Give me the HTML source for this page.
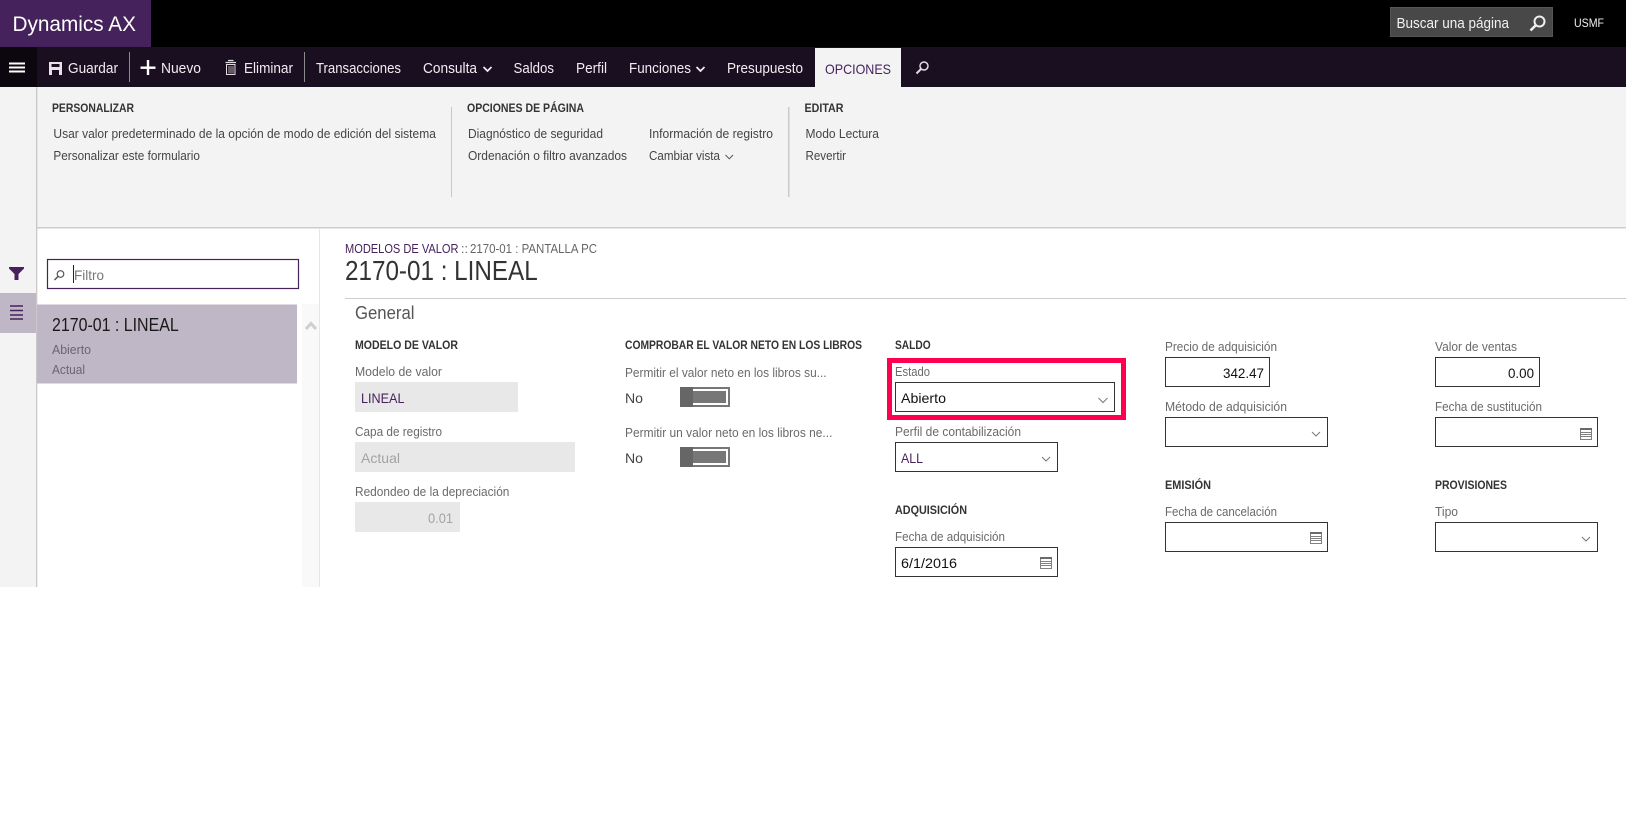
<!DOCTYPE html>
<html lang="es">
<head>
<meta charset="utf-8">
<title>Dynamics AX</title>
<style>
html,body{margin:0;padding:0;background:#fff;width:1626px;height:822px;overflow:hidden}
svg{display:block}
text{font-family:"Liberation Sans",sans-serif;white-space:pre}
.cmd{font-size:14.5px;fill:#f0edf2}
.rh{font-size:11.5px;font-weight:bold;fill:#333}
.ri{font-size:12.5px;fill:#444}
.lb{font-size:12.5px;fill:#6a6a6a}
.h{font-size:11.5px;font-weight:bold;fill:#333}
.v{font-size:14px;fill:#111}
.box{fill:#fff;stroke:#333;stroke-width:1}
.dis{fill:#e8e8e8}
.chev{fill:none;stroke:#777;stroke-width:1}
.cal{fill:none;stroke:#808080;stroke-width:1}
</style>
</head>
<body>
<svg xmlns="http://www.w3.org/2000/svg" width="1626" height="822" viewBox="0 0 1626 822" shape-rendering="geometricPrecision">
<defs>
<g id="cal">
<rect class="cal" x=".5" y=".5" width="11" height="11"/>
<rect x="0" y="0" width="12" height="2" fill="#6a6a6a"/>
<path class="cal" d="M1 4.500H11M1 6.500H11M1 8.500H11"/>
</g>
</defs>

<!-- top bar -->
<rect x="0" y="0" width="1626" height="47" fill="#000"/>
<rect x="0" y="0" width="151" height="47" fill="#45225b"/>
<text x="12.5" y="31" font-size="21" fill="#fff" textLength="123.5" lengthAdjust="spacingAndGlyphs">Dynamics AX</text>
<rect x="1390.5" y="7.5" width="162" height="29" fill="#484848" stroke="#555"/>
<text x="1396.5" y="28" font-size="14.5" fill="#f2f2f2" textLength="112.5" lengthAdjust="spacingAndGlyphs">Buscar una página</text>
<circle cx="1539.5" cy="21.5" r="5" fill="none" stroke="#f0f0f0" stroke-width="2"/>
<path d="M1535.5 25.5L1530.5 30.5" stroke="#f0f0f0" stroke-width="2.6" fill="none"/>
<text x="1574" y="27" font-size="12" fill="#f0f0f0" textLength="30" lengthAdjust="spacingAndGlyphs">USMF</text>

<!-- command bar -->
<rect x="0" y="47" width="1626" height="40" fill="#1a0f20"/>
<rect x="0" y="47" width="37" height="40" fill="#0c070f"/>
<rect x="9" y="62.5" width="16" height="2" fill="#fff"/>
<rect x="9" y="66.5" width="16" height="2" fill="#fff"/>
<rect x="9" y="70.5" width="16" height="2" fill="#fff"/>
<path fill-rule="evenodd" d="M49 62H62V75H59V70H52V75H49ZM51.5 64V67H59.5V64Z" fill="#e6e3e8"/>
<text x="68" y="73" class="cmd" textLength="50" lengthAdjust="spacingAndGlyphs">Guardar</text>
<rect x="129" y="52" width="1" height="30" fill="#8a8a8a"/>
<rect x="140.5" y="66.5" width="15" height="2.4" fill="#fff"/>
<rect x="146.8" y="60" width="2.4" height="15" fill="#fff"/>
<text x="161" y="73" class="cmd" textLength="40" lengthAdjust="spacingAndGlyphs">Nuevo</text>
<path d="M225.5 62.5H236M228 60.5H233.500" stroke="#e0dde2" stroke-width="1.2" fill="none"/>
<rect x="226.500" y="64.500" width="8.500" height="10" fill="none" stroke="#e0dde2"/>
<path d="M229 66V73.500M231 66V73.500M233 66V73.500" stroke="#aaa6ad" stroke-width="1" fill="none"/>
<text x="244" y="73" class="cmd" textLength="49" lengthAdjust="spacingAndGlyphs">Eliminar</text>
<rect x="304" y="52" width="1" height="30" fill="#8a8a8a"/>
<text x="316" y="73" class="cmd" textLength="85" lengthAdjust="spacingAndGlyphs">Transacciones</text>
<text x="423" y="73" class="cmd" textLength="54" lengthAdjust="spacingAndGlyphs">Consulta</text>
<path d="M483.500 67L487.500 71L491.500 67" fill="none" stroke="#f0edf2" stroke-width="1.700"/>
<text x="513.500" y="73" class="cmd" textLength="40.500" lengthAdjust="spacingAndGlyphs">Saldos</text>
<text x="576" y="73" class="cmd" textLength="31" lengthAdjust="spacingAndGlyphs">Perfil</text>
<text x="629" y="73" class="cmd" textLength="62" lengthAdjust="spacingAndGlyphs">Funciones</text>
<path d="M696.500 67L700.500 71L704.500 67" fill="none" stroke="#f0edf2" stroke-width="1.700"/>
<text x="727" y="73" class="cmd" textLength="76" lengthAdjust="spacingAndGlyphs">Presupuesto</text>
<rect x="815" y="48" width="86" height="39" fill="#f3f3f3"/>
<text x="825" y="74" font-size="14" fill="#45225b" textLength="66" lengthAdjust="spacingAndGlyphs">OPCIONES</text>
<circle cx="924" cy="66" r="4" fill="none" stroke="#e0dde2" stroke-width="1.500"/>
<path d="M921 69L916.500 73.500" stroke="#e0dde2" stroke-width="2" fill="none"/>

<!-- ribbon -->
<rect x="0" y="87" width="1626" height="140" fill="#f3f3f3"/>
<rect x="36" y="227" width="1590" height="1.500" fill="#cccccc"/>
<rect x="0" y="227" width="36" height="360" fill="#f3f3f3"/>
<rect x="36" y="87" width="1.300" height="500" fill="#c9c9c9"/>
<text x="52" y="112" class="rh" textLength="82" lengthAdjust="spacingAndGlyphs">PERSONALIZAR</text>
<text x="53.400" y="138" class="ri" textLength="382.500" lengthAdjust="spacingAndGlyphs">Usar valor predeterminado de la opción de modo de edición del sistema</text>
<text x="53.400" y="160" class="ri" textLength="146.500" lengthAdjust="spacingAndGlyphs">Personalizar este formulario</text>
<rect x="451" y="107" width="1" height="90" fill="#c9c9c9"/>
<text x="467" y="112" class="rh" textLength="117" lengthAdjust="spacingAndGlyphs">OPCIONES DE PÁGINA</text>
<text x="468" y="138" class="ri" textLength="135" lengthAdjust="spacingAndGlyphs">Diagnóstico de seguridad</text>
<text x="468" y="160" class="ri" textLength="159" lengthAdjust="spacingAndGlyphs">Ordenación o filtro avanzados</text>
<text x="649" y="138" class="ri" textLength="124" lengthAdjust="spacingAndGlyphs">Información de registro</text>
<text x="649" y="160" class="ri" textLength="71" lengthAdjust="spacingAndGlyphs">Cambiar vista</text>
<path d="M725.500 155L729.300 158.800L733 155" fill="none" stroke="#555" stroke-width="1"/>
<rect x="788" y="107" width="1.500" height="90" fill="#c9c9c9"/>
<text x="804.500" y="112" class="rh" textLength="39" lengthAdjust="spacingAndGlyphs">EDITAR</text>
<text x="805.500" y="138" class="ri" textLength="73.500" lengthAdjust="spacingAndGlyphs">Modo Lectura</text>
<text x="805.500" y="160" class="ri" textLength="40.500" lengthAdjust="spacingAndGlyphs">Revertir</text>

<!-- rail icons -->
<path d="M9 267H24V268.500L18.500 274V280H14.500V274L9 268.500Z" fill="#45225b"/>
<rect x="0" y="293" width="36" height="40" fill="#bfb7c5"/>
<path d="M10 306H23M10 310.500H23M10 315H23M10 319H23" stroke="#45225b" stroke-width="1.600" fill="none"/>

<!-- list pane -->
<rect x="319" y="228" width="1" height="359" fill="#e6e6e6"/>
<rect x="47.500" y="259.500" width="251" height="29" fill="#fff" stroke="#45225b" stroke-width="1.200"/>
<circle cx="60.500" cy="274" r="3.300" fill="none" stroke="#555" stroke-width="1.200"/>
<path d="M58 276.500L54.500 280" stroke="#555" stroke-width="1.500" fill="none"/>
<rect x="73" y="265" width="1" height="18" fill="#222"/>
<text x="74" y="280" font-size="14" fill="#777" textLength="30" lengthAdjust="spacingAndGlyphs">Filtro</text>
<rect x="37" y="304.500" width="260" height="79" fill="#bfb7c5"/>
<rect x="302" y="304" width="17" height="283" fill="#f9f9f9"/>
<path d="M306 329L311 323.500L316 329" fill="none" stroke="#cfcfcf" stroke-width="3"/>
<text x="52" y="331" font-size="18" fill="#1a1a1a" textLength="126.700" lengthAdjust="spacingAndGlyphs">2170-01 : LINEAL</text>
<text x="52" y="354" font-size="12.500" fill="#6a6670" textLength="39" lengthAdjust="spacingAndGlyphs">Abierto</text>
<text x="52" y="374" font-size="12.500" fill="#6a6670" textLength="33" lengthAdjust="spacingAndGlyphs">Actual</text>

<!-- header -->
<text x="345" y="253" font-size="12.500" fill="#45225b" textLength="113.500" lengthAdjust="spacingAndGlyphs">MODELOS DE VALOR</text>
<text x="461" y="253" font-size="12.500" fill="#666">::</text>
<text x="470" y="253" font-size="12.500" fill="#666" textLength="127" lengthAdjust="spacingAndGlyphs">2170-01 : PANTALLA PC</text>
<text x="345" y="280" font-size="28" fill="#333" textLength="192.700" lengthAdjust="spacingAndGlyphs">2170-01 : LINEAL</text>
<rect x="345" y="298" width="1281" height="1" fill="#cccccc"/>
<text x="355" y="319" font-size="18" fill="#555" textLength="59.500" lengthAdjust="spacingAndGlyphs">General</text>

<!-- col 1 -->
<text x="355" y="349" class="h" textLength="103" lengthAdjust="spacingAndGlyphs">MODELO DE VALOR</text>
<text x="355" y="376" class="lb" textLength="87" lengthAdjust="spacingAndGlyphs">Modelo de valor</text>
<rect class="dis" x="355" y="382" width="163" height="30"/>
<text x="361" y="403" font-size="14" fill="#45225b" textLength="43.500" lengthAdjust="spacingAndGlyphs">LINEAL</text>
<text x="355" y="436" class="lb" textLength="87" lengthAdjust="spacingAndGlyphs">Capa de registro</text>
<rect class="dis" x="355" y="442" width="220" height="30"/>
<text x="361" y="463" font-size="14" fill="#a3a3a3" textLength="39" lengthAdjust="spacingAndGlyphs">Actual</text>
<text x="355" y="496" class="lb" textLength="154.400" lengthAdjust="spacingAndGlyphs">Redondeo de la depreciación</text>
<rect class="dis" x="355" y="502" width="105" height="30"/>
<text x="428" y="523" font-size="14" fill="#a3a3a3" textLength="25" lengthAdjust="spacingAndGlyphs">0.01</text>

<!-- col 2 -->
<text x="625" y="349" class="h" textLength="237" lengthAdjust="spacingAndGlyphs">COMPROBAR EL VALOR NETO EN LOS LIBROS</text>
<text x="625" y="377" class="lb" textLength="201.600" lengthAdjust="spacingAndGlyphs">Permitir el valor neto en los libros su...</text>
<text x="625" y="403" font-size="14" fill="#444" textLength="18" lengthAdjust="spacingAndGlyphs">No</text>
<rect x="681" y="388" width="48" height="18" fill="#fff" stroke="#777" stroke-width="2"/>
<rect x="693" y="391" width="33" height="12" fill="#777"/>
<rect x="680" y="387" width="13" height="20" fill="#666"/>
<text x="625" y="437" class="lb" textLength="207.400" lengthAdjust="spacingAndGlyphs">Permitir un valor neto en los libros ne...</text>
<text x="625" y="463" font-size="14" fill="#444" textLength="18" lengthAdjust="spacingAndGlyphs">No</text>
<rect x="681" y="448" width="48" height="18" fill="#fff" stroke="#777" stroke-width="2"/>
<rect x="693" y="451" width="33" height="12" fill="#777"/>
<rect x="680" y="447" width="13" height="20" fill="#666"/>

<!-- col 3 -->
<text x="895" y="349" class="h" textLength="35.600" lengthAdjust="spacingAndGlyphs">SALDO</text>
<rect x="889.500" y="360.500" width="234" height="57" fill="none" stroke="#ff0050" stroke-width="5"/>
<text x="895" y="376" class="lb" textLength="35" lengthAdjust="spacingAndGlyphs">Estado</text>
<rect class="box" x="895.500" y="382.500" width="219" height="29"/>
<text x="901" y="403" class="v" textLength="45" lengthAdjust="spacingAndGlyphs">Abierto</text>
<path class="chev" d="M1098.500 398L1103 402.500L1107.500 398"/>
<text x="895" y="436" class="lb" textLength="126" lengthAdjust="spacingAndGlyphs">Perfil de contabilización</text>
<rect class="box" x="895.500" y="442.500" width="162" height="29"/>
<text x="901" y="463" font-size="14" fill="#45225b" textLength="22" lengthAdjust="spacingAndGlyphs">ALL</text>
<path class="chev" d="M1042 457L1046 461L1050 457"/>
<text x="895" y="514" class="h" textLength="72" lengthAdjust="spacingAndGlyphs">ADQUISICIÓN</text>
<text x="895" y="541" class="lb" textLength="110" lengthAdjust="spacingAndGlyphs">Fecha de adquisición</text>
<rect class="box" x="895.500" y="547.500" width="162" height="29"/>
<text x="901" y="568" class="v" textLength="56" lengthAdjust="spacingAndGlyphs">6/1/2016</text>
<use href="#cal" x="1040" y="557"/>

<!-- col 4 -->
<text x="1165" y="351" class="lb" textLength="112" lengthAdjust="spacingAndGlyphs">Precio de adquisición</text>
<rect class="box" x="1165.500" y="357.500" width="104" height="29"/>
<text x="1223" y="378" class="v" textLength="41" lengthAdjust="spacingAndGlyphs">342.47</text>
<text x="1165" y="411" class="lb" textLength="122" lengthAdjust="spacingAndGlyphs">Método de adquisición</text>
<rect class="box" x="1165.500" y="417.500" width="162" height="29"/>
<path class="chev" d="M1312 432L1316 436L1320 432"/>
<text x="1165" y="489" class="h" textLength="46" lengthAdjust="spacingAndGlyphs">EMISIÓN</text>
<text x="1165" y="516" class="lb" textLength="112" lengthAdjust="spacingAndGlyphs">Fecha de cancelación</text>
<rect class="box" x="1165.500" y="522.500" width="162" height="29"/>
<use href="#cal" x="1310" y="532"/>

<!-- col 5 -->
<text x="1435" y="351" class="lb" textLength="82" lengthAdjust="spacingAndGlyphs">Valor de ventas</text>
<rect class="box" x="1435.500" y="357.500" width="104" height="29"/>
<text x="1508" y="378" class="v" textLength="26" lengthAdjust="spacingAndGlyphs">0.00</text>
<text x="1435" y="411" class="lb" textLength="107" lengthAdjust="spacingAndGlyphs">Fecha de sustitución</text>
<rect class="box" x="1435.500" y="417.500" width="162" height="29"/>
<use href="#cal" x="1580" y="428"/>
<text x="1435" y="489" class="h" textLength="72" lengthAdjust="spacingAndGlyphs">PROVISIONES</text>
<text x="1435" y="516" class="lb" textLength="23" lengthAdjust="spacingAndGlyphs">Tipo</text>
<rect class="box" x="1435.500" y="522.500" width="162" height="29"/>
<path class="chev" d="M1582 537L1586 541L1590 537"/>
</svg>
</body>
</html>
